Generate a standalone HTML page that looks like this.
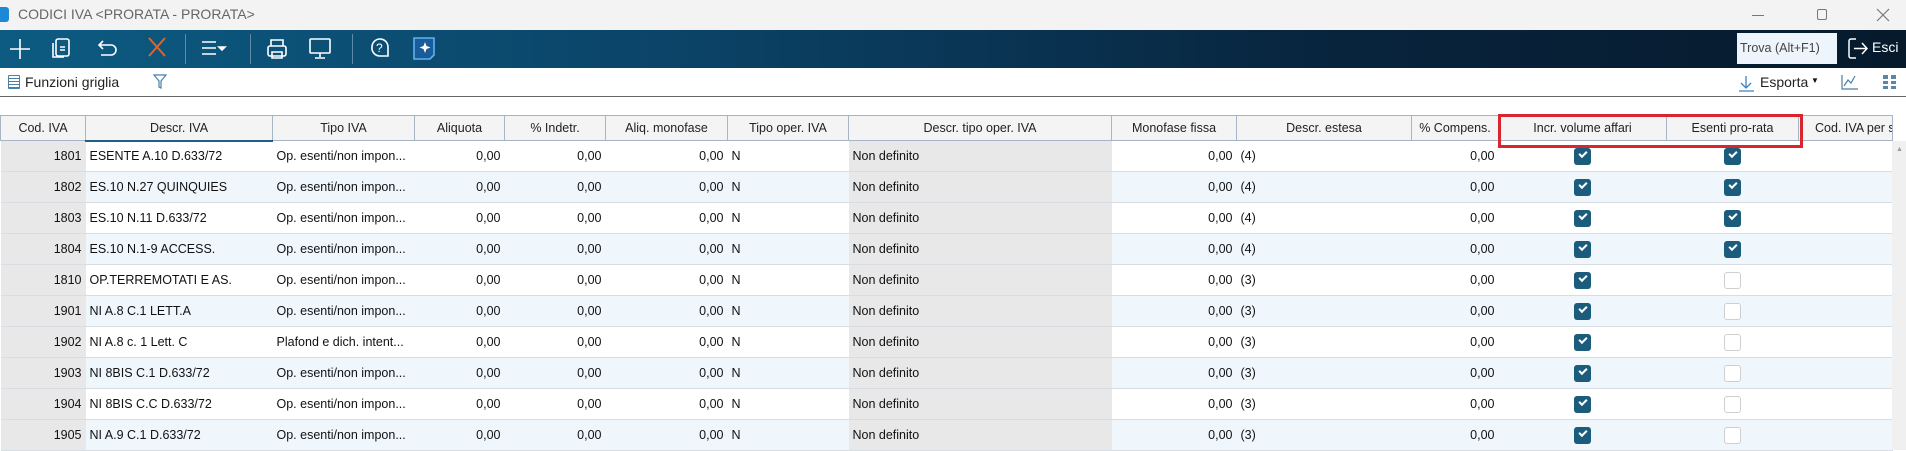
<!DOCTYPE html>
<html><head><meta charset="utf-8"><style>
*{margin:0;padding:0;box-sizing:border-box}
body{width:1906px;height:450px;overflow:hidden;background:#fff;font-family:"Liberation Sans",sans-serif;font-size:13px;color:#111;position:relative}
.title{position:absolute;left:0;top:0;width:1906px;height:30px;background:#f3f3f3}
.title .t{position:absolute;left:18px;top:6px;font-size:14px;color:#666}
.tb{position:absolute;left:0;top:30px;width:1906px;height:38px;background:linear-gradient(90deg,#0d5b82 0%,#0b4468 35%,#08243d 70%,#061a2c 100%)}
.tb svg{position:absolute;top:0}
.sep{position:absolute;top:4px;width:1px;height:30px;background:#5d8aa6}
.fr{position:absolute;left:0;top:68px;width:1906px;height:29px;border-bottom:1px solid #666}
table{position:absolute;left:0;top:115px;border-collapse:collapse;table-layout:fixed;width:1892px}
th{height:25px;background:#f4f4f4;border:1px solid #a8b5c6;border-top:1px solid #a8b5c6;font-weight:normal;font-size:12.5px;color:#222;white-space:nowrap;overflow:hidden}
td{height:31px;border-bottom:1px solid #d8dde3;white-space:nowrap;overflow:hidden;padding:0 4px;font-size:12.5px}
tr.a td{background:#fff}tr.b td{background:#eff7fd}
td.g{background:#e8e8e8!important}
td.r{text-align:right}
td.c{text-align:center;padding:0}
.cb{display:inline-block;width:17px;height:17px;border-radius:3px;background:#1b5c7d;vertical-align:middle;position:relative}
.cb:after{content:"";position:absolute;left:5px;top:3px;width:6px;height:3px;border-left:2px solid #fff;border-bottom:2px solid #fff;transform:rotate(-45deg)}
.ub{display:inline-block;width:17px;height:17px;border-radius:3px;border:1.5px solid #cfcfcf;background:#fff;vertical-align:middle}
</style></head><body>
<div class="title">
<div style="position:absolute;left:0;top:7px;width:9px;height:15px;background:#1e88d8;border-radius:0 3px 3px 0"></div>
<span class="t">CODICI IVA &lt;PRORATA - PRORATA&gt;</span>
<div style="position:absolute;left:1752px;top:15px;width:12px;height:1px;background:#777"></div>
<div style="position:absolute;left:1817px;top:9px;width:10px;height:11px;border:1px solid #777;border-radius:2px"></div>
<svg style="position:absolute;left:1876px;top:8px" width="14" height="14" stroke="#777" stroke-width="1.2"><path d="M1 1l12 12M13 1L1 13"/></svg>
</div>
<div class="tb">
<svg width="470" height="38" fill="none" stroke="#fff" stroke-width="1.6">
<path d="M10 11h20M20 1v20" transform="translate(0,8)"/>
<rect x="56" y="9" width="13" height="17" rx="2"/><path d="M53 13v14h11"/><path d="M60 17h5M60 20h5"/>
<path d="M103 11l-4 4 4 4M99 15h12a5 5 0 010 10h-10"/>
<path d="M149 8l16 18M165 8l-16 18" stroke="#e0642c" stroke-width="2"/>
<path d="M202 12h14M202 18h14M202 24h14"/><path d="M219 17l3 3 3-3z" fill="#fff"/>
<rect x="268" y="16" width="18" height="10" rx="2"/><path d="M271 16v-6h12v6M272 22h10v6h-10z"/>
<rect x="310" y="9" width="20" height="14" rx="1"/><path d="M320 23v4M315 28h10"/>
<path d="M372 17a8 8 0 1116 0v9h-8a8 8 0 01-8-9z"/><text x="376" y="22" fill="#fff" stroke="none" font-size="12" font-family="Liberation Sans">?</text>
<path d="M414 8h20v17l-4 4h-16z" fill="#1a5b9a" stroke="#5eb2f0"/><path d="M425 12l1.5 4 4 1.5-4 1.5-1.5 4-1.5-4-4-1.5 4-1.5z" fill="#fff" stroke="none"/>
</svg>
<div class="sep" style="left:185px"></div><div class="sep" style="left:250px"></div><div class="sep" style="left:352px"></div>
<div style="position:absolute;left:1737px;top:3px;width:100px;height:31px;background:#eef4fb;color:#444;font-size:12.5px;line-height:31px;padding-left:3px;white-space:nowrap">Trova (Alt+F1)</div>
<svg style="position:absolute;left:1848px;top:8px" width="22" height="22" fill="none" stroke="#fff" stroke-width="1.5"><path d="M8 1H3a2 2 0 00-2 2v15a2 2 0 002 2h5"/><path d="M6 10.5h13M14 5l5 5.5-5 5.5"/></svg>
<span style="position:absolute;left:1872px;top:9px;color:#fff;font-size:14px">Esci</span>
</div>
<div class="fr">
<div style="position:absolute;left:8px;top:7px;width:12px;height:14px;border:1px solid #4a7fa6;border-radius:1px;background:repeating-linear-gradient(#fff 0 2px,#4a7fa6 2px 3px)"></div>
<span style="position:absolute;left:25px;top:6px;font-size:14px;color:#222">Funzioni griglia</span>
<svg style="position:absolute;left:152px;top:5px" width="16" height="18" fill="none" stroke="#4a7fa6" stroke-width="1.2"><path d="M2 2h12l-5 6v7l-2-1v-6z"/></svg>
<svg style="position:absolute;left:1737px;top:6px" width="20" height="20" fill="none" stroke="#3b82c4" stroke-width="1.3"><path d="M9 2v12M4 9l5 5 5-5M2 17h15"/></svg>
<span style="position:absolute;left:1760px;top:6px;font-size:14px;color:#222">Esporta</span>
<span style="position:absolute;left:1811px;top:8px;font-size:8px">▼</span>
<svg style="position:absolute;left:1840px;top:5px" width="20" height="18" fill="none" stroke="#4a7fa6" stroke-width="1.2"><path d="M2 2v14h16M4 13l4-6 3 3 4-7"/></svg>
<div style="position:absolute;left:1883px;top:7px;width:13px;height:14px;background:repeating-linear-gradient(90deg,#5a86a8 0 5px,transparent 5px 8px)"></div>
<div style="position:absolute;left:1883px;top:11px;width:13px;height:2px;background:#fff"></div>
<div style="position:absolute;left:1883px;top:16px;width:13px;height:2px;background:#fff"></div>
</div>
<table>
<colgroup><col style="width:85px"><col style="width:187px"><col style="width:142px"><col style="width:90px"><col style="width:101px"><col style="width:122px"><col style="width:121px"><col style="width:263px"><col style="width:125px"><col style="width:175px"><col style="width:87px"><col style="width:168px"><col style="width:132px"><col style="width:94px"></colgroup>
<tr><th>Cod. IVA</th><th style="border-bottom:2px solid #1d5f86">Descr. IVA</th><th>Tipo IVA</th><th>Aliquota</th><th>% Indetr.</th><th>Aliq. monofase</th><th>Tipo oper. IVA</th><th>Descr. tipo oper. IVA</th><th>Monofase fissa</th><th>Descr. estesa</th><th>% Compens.</th><th>Incr. volume affari</th><th>Esenti pro-rata</th><th style="text-align:left;padding-left:16px">Cod. IVA per s</th></tr>
<tr class="a"><td class="g r">1801</td><td>ESENTE A.10 D.633/72</td><td>Op. esenti/non impon...</td><td class="r">0,00</td><td class="r">0,00</td><td class="r">0,00</td><td>N</td><td class="g">Non definito</td><td class="r">0,00</td><td>(4)</td><td class="r">0,00</td><td class="c"><span class="cb"></span></td><td class="c"><span class="cb"></span></td><td></td></tr>
<tr class="b"><td class="g r">1802</td><td>ES.10 N.27 QUINQUIES</td><td>Op. esenti/non impon...</td><td class="r">0,00</td><td class="r">0,00</td><td class="r">0,00</td><td>N</td><td class="g">Non definito</td><td class="r">0,00</td><td>(4)</td><td class="r">0,00</td><td class="c"><span class="cb"></span></td><td class="c"><span class="cb"></span></td><td></td></tr>
<tr class="a"><td class="g r">1803</td><td>ES.10 N.11 D.633/72</td><td>Op. esenti/non impon...</td><td class="r">0,00</td><td class="r">0,00</td><td class="r">0,00</td><td>N</td><td class="g">Non definito</td><td class="r">0,00</td><td>(4)</td><td class="r">0,00</td><td class="c"><span class="cb"></span></td><td class="c"><span class="cb"></span></td><td></td></tr>
<tr class="b"><td class="g r">1804</td><td>ES.10 N.1-9 ACCESS.</td><td>Op. esenti/non impon...</td><td class="r">0,00</td><td class="r">0,00</td><td class="r">0,00</td><td>N</td><td class="g">Non definito</td><td class="r">0,00</td><td>(4)</td><td class="r">0,00</td><td class="c"><span class="cb"></span></td><td class="c"><span class="cb"></span></td><td></td></tr>
<tr class="a"><td class="g r">1810</td><td>OP.TERREMOTATI E AS.</td><td>Op. esenti/non impon...</td><td class="r">0,00</td><td class="r">0,00</td><td class="r">0,00</td><td>N</td><td class="g">Non definito</td><td class="r">0,00</td><td>(3)</td><td class="r">0,00</td><td class="c"><span class="cb"></span></td><td class="c"><span class="ub"></span></td><td></td></tr>
<tr class="b"><td class="g r">1901</td><td>NI A.8 C.1 LETT.A</td><td>Op. esenti/non impon...</td><td class="r">0,00</td><td class="r">0,00</td><td class="r">0,00</td><td>N</td><td class="g">Non definito</td><td class="r">0,00</td><td>(3)</td><td class="r">0,00</td><td class="c"><span class="cb"></span></td><td class="c"><span class="ub"></span></td><td></td></tr>
<tr class="a"><td class="g r">1902</td><td>NI A.8 c. 1 Lett. C</td><td>Plafond e dich. intent...</td><td class="r">0,00</td><td class="r">0,00</td><td class="r">0,00</td><td>N</td><td class="g">Non definito</td><td class="r">0,00</td><td>(3)</td><td class="r">0,00</td><td class="c"><span class="cb"></span></td><td class="c"><span class="ub"></span></td><td></td></tr>
<tr class="b"><td class="g r">1903</td><td>NI 8BIS C.1 D.633/72</td><td>Op. esenti/non impon...</td><td class="r">0,00</td><td class="r">0,00</td><td class="r">0,00</td><td>N</td><td class="g">Non definito</td><td class="r">0,00</td><td>(3)</td><td class="r">0,00</td><td class="c"><span class="cb"></span></td><td class="c"><span class="ub"></span></td><td></td></tr>
<tr class="a"><td class="g r">1904</td><td>NI 8BIS C.C D.633/72</td><td>Op. esenti/non impon...</td><td class="r">0,00</td><td class="r">0,00</td><td class="r">0,00</td><td>N</td><td class="g">Non definito</td><td class="r">0,00</td><td>(3)</td><td class="r">0,00</td><td class="c"><span class="cb"></span></td><td class="c"><span class="ub"></span></td><td></td></tr>
<tr class="b"><td class="g r">1905</td><td>NI A.9 C.1 D.633/72</td><td>Op. esenti/non impon...</td><td class="r">0,00</td><td class="r">0,00</td><td class="r">0,00</td><td>N</td><td class="g">Non definito</td><td class="r">0,00</td><td>(3)</td><td class="r">0,00</td><td class="c"><span class="cb"></span></td><td class="c"><span class="ub"></span></td><td></td></tr>
</table>
<div style="position:absolute;left:1892px;top:141px;width:14px;height:309px;background:#f0f0f0"></div>
<span style="position:absolute;left:1896px;top:146px;font-size:7px;color:#999">▲</span>
<div style="position:absolute;left:1498px;top:114px;width:305px;height:34px;border:3px solid #d9262e"></div>
</body></html>
